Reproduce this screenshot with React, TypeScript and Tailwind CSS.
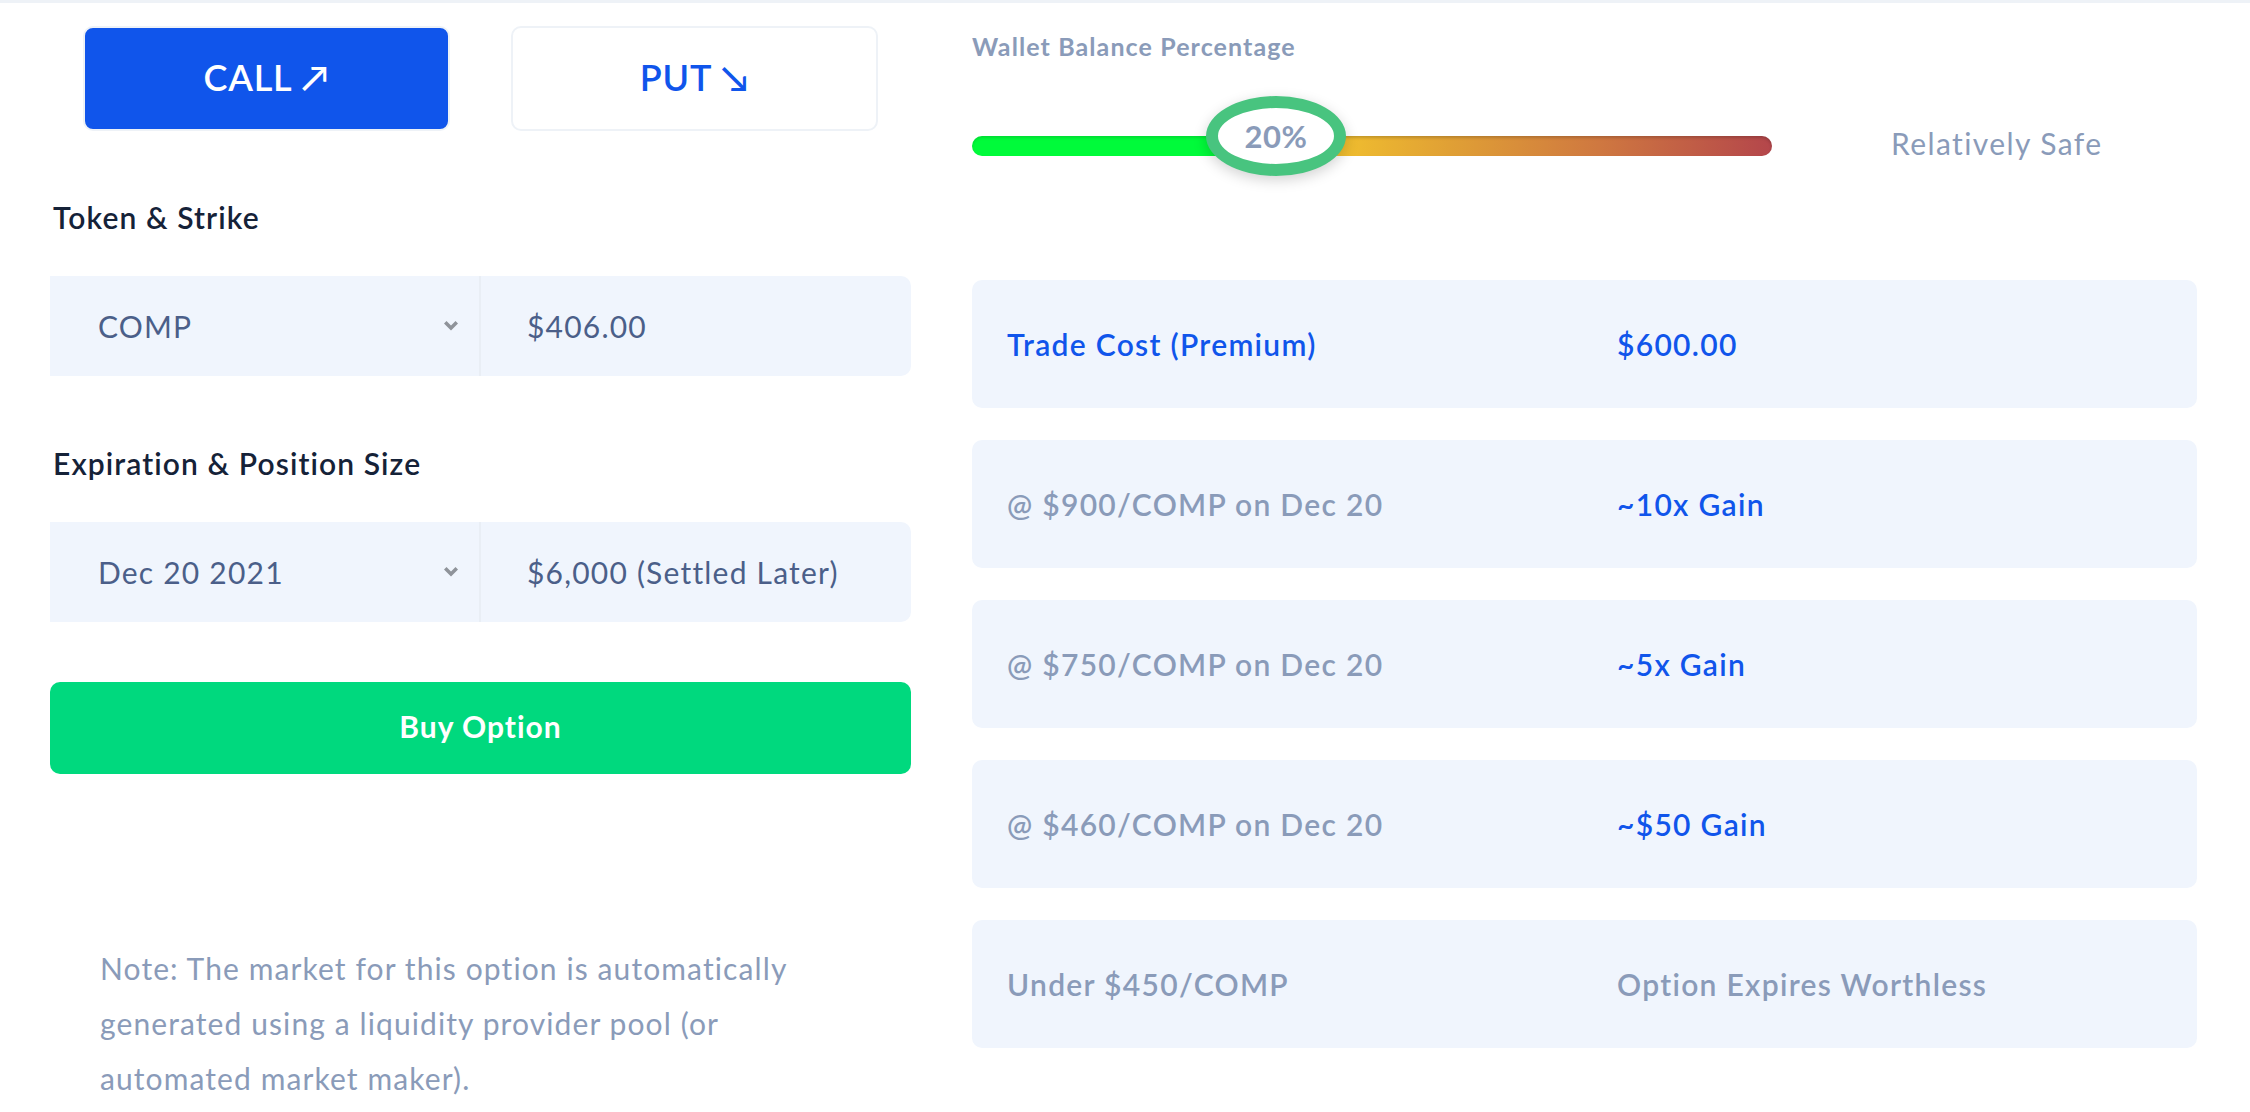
import React from 'react';

const Chevron: React.FC = () => (
    <svg width="14" height="10" viewBox="0 0 14 10" className="shrink-0">
        <polygon points="0,2.5 2.5,0 7,4.5 11.5,0 14,2.5 7,9.5" fill="#8f939a" />
    </svg>
);

interface InputRowProps {
    select: string;
    value: string;
}

const InputRow: React.FC<InputRowProps> = ({ select, value }) => (
    <div className="flex h-[100px] overflow-hidden rounded-r-[10px] bg-[#f0f5fd]">
        <div className="flex w-[431px] items-center justify-between border-r-2 border-[#e9eef5] pl-[48px] pr-[21px]">
            <span className="text-[30px] tracking-[1.2px] text-[#4b5f89]">{select}</span>
            <Chevron />
        </div>
        <div className="flex items-center pl-[46px] text-[30px] tracking-[1.2px] text-[#4b5f89]">{value}</div>
    </div>
);

interface OutcomeProps {
    label: string;
    value: string;
    labelBlue?: boolean;
    valueGray?: boolean;
}

const Outcome: React.FC<OutcomeProps> = ({ label, value, labelBlue, valueGray }) => (
    <div className="flex h-[128px] items-center rounded-[10px] bg-[#f0f5fd] pl-[35px]">
        <span
            className={`w-[610px] text-[30px] font-semibold tracking-[1.3px] ${labelBlue ? 'text-[#1055eb]' : 'text-[#8a9bb9]'}`}
        >
            {label}
        </span>
        <span
            className={`text-[30px] font-semibold tracking-[1.3px] ${valueGray ? 'text-[#8a9bb9]' : 'text-[#1055eb]'}`}
        >
            {value}
        </span>
    </div>
);

export default function App() {
    return (
        <div className="min-h-screen border-t-[3px] border-[#eef2f7] bg-white font-['Lato','Noto_Sans',sans-serif]">
            <div className="flex pl-[50px] pr-[53px]">
                {/* left column: order form */}
                <div className="w-[861px] shrink-0">
                    <div className="mt-[23px] flex gap-[61px] px-[33px]">
                        <button className="flex h-[105px] w-[368px] items-center justify-center rounded-[10px] border-2 border-[#eef2f7] bg-[#1055eb] pb-[4px] text-[36px] font-semibold tracking-[0.8px] text-white">
                            CALL ↗
                        </button>
                        <button className="flex h-[105px] w-[369px] items-center justify-center rounded-[10px] border-2 border-[#eef2f7] bg-white pb-[4px] text-[36px] font-semibold tracking-[0.8px] text-[#1055eb]">
                            PUT ↘
                        </button>
                    </div>

                    <h3 className="mt-[66px] pl-[3px] text-[30px] font-semibold leading-[40px] tracking-[1.1px] text-[#152238]">
                        Token &amp; Strike
                    </h3>
                    <div className="mt-[39px]">
                        <InputRow select="COMP" value="$406.00" />
                    </div>

                    <h3 className="mt-[67px] pl-[3px] text-[30px] font-semibold leading-[40px] tracking-[1.1px] text-[#152238]">
                        Expiration &amp; Position Size
                    </h3>
                    <div className="mt-[39px]">
                        <InputRow select="Dec 20 2021" value="$6,000 (Settled Later)" />
                    </div>

                    <button className="mt-[60px] flex h-[92px] w-full items-center justify-center rounded-[10px] bg-[#00d97e] pb-[4px] text-[30px] font-bold tracking-[1px] text-white">
                        Buy Option
                    </button>

                    <p className="mt-[167px] w-[790px] pl-[50px] text-[30px] leading-[55px] tracking-[1.1px] text-[#8a9bb9]">
                        Note: The market for this option is automatically generated using a liquidity provider pool
                        (or automated market maker).
                    </p>
                </div>

                {/* right column: wallet slider and payoff table */}
                <div className="ml-[61px] flex-1">
                    <div className="mt-[27px] text-[25px] font-bold leading-[32px] tracking-[1.1px] text-[#8a9bb9]">
                        Wallet Balance Percentage
                    </div>

                    <div className="mt-[74px] flex h-[20px] items-center">
                        <div className="relative flex h-[20px] w-[800px] shrink-0 overflow-visible">
                            <div className="h-full w-[304px] rounded-l-full bg-[#00fb3a] shadow-[inset_0_2px_3px_rgba(0,0,0,0.12)]" />
                            <div className="h-full flex-1 rounded-r-full bg-[linear-gradient(90deg,#f2c22e_10%,#e0a035_35%,#cf7840_65%,#b4464b)] shadow-[inset_0_2px_3px_rgba(0,0,0,0.18)]" />
                            <div className="absolute left-[234px] top-[-40px] flex h-[80px] w-[140px] items-center justify-center rounded-[50%] border-[12px] border-[#48c47f] bg-white shadow-[0_4px_14px_rgba(0,0,0,0.18)]">
                                <span className="text-[31px] font-bold tracking-[0.5px] text-[#8a9bb9]">20%</span>
                            </div>
                        </div>
                        <span className="ml-[119px] pb-[6px] text-[30px] tracking-[1.4px] text-[#8a9bb9]">
                            Relatively Safe
                        </span>
                    </div>

                    <div className="mt-[124px] flex flex-col gap-[32px]">
                        <Outcome label="Trade Cost (Premium)" value="$600.00" labelBlue />
                        <Outcome label="@ $900/COMP on Dec 20" value="~10x Gain" />
                        <Outcome label="@ $750/COMP on Dec 20" value="~5x Gain" />
                        <Outcome label="@ $460/COMP on Dec 20" value="~$50 Gain" />
                        <Outcome label="Under $450/COMP" value="Option Expires Worthless" valueGray />
                    </div>
                </div>
            </div>
        </div>
    );
}
